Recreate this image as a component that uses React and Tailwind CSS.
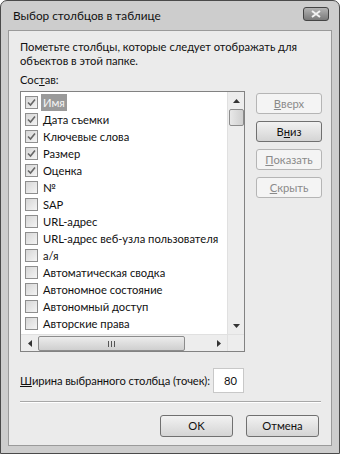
import React from 'react'

// Column chooser dialog (Vista-style, grayscale)

const rows = [
  { label: 'Имя', checked: true, selected: true },
  { label: 'Дата съемки', checked: true },
  { label: 'Ключевые слова', checked: true },
  { label: 'Размер', checked: true },
  { label: 'Оценка', checked: true },
  { label: '№' },
  { label: 'SAP' },
  { label: 'URL-адрес' },
  { label: 'URL-адрес веб-узла пользователя' },
  { label: 'а/я' },
  { label: 'Автоматическая сводка' },
  { label: 'Автономное состояние' },
  { label: 'Автономный доступ' },
  { label: 'Авторские права' },
  { label: '' }, // partly hidden row under the scrollbar
]

function CheckBox({ checked }) {
  return (
    <div className="w-[13px] h-[13px] border border-[#8e8e8e] bg-gradient-to-br from-[#d6d6d6] to-[#f4f4f4] flex items-center justify-center shrink-0">
      {checked && (
        <svg width="9" height="9" viewBox="0 0 9 9">
          <path d="M1 4.5 L3.5 7 L8 1.5" fill="none" stroke="#666" strokeWidth="1.6" />
        </svg>
      )}
    </div>
  )
}

function Arrow({ dir }) {
  const pts = {
    up: '0,4 3.5,0 7,4',
    down: '0,0 3.5,4 7,0',
    left: '4,0 0,3.5 4,7',
    right: '0,0 4,3.5 0,7',
  }[dir]
  const vertical = dir === 'up' || dir === 'down'
  return (
    <svg width={vertical ? 7 : 4} height={vertical ? 4 : 7}>
      <polygon points={pts} fill="#333" />
    </svg>
  )
}

function SideButton({ children, enabled }) {
  return (
    <div
      className={`h-[21px] w-[66px] rounded-[3px] border flex items-center justify-center ${
        enabled
          ? 'border-[#707070] bg-gradient-to-b from-[#f2f2f2] to-[#d4d4d4] text-[#111]'
          : 'border-[#b5b5b5] bg-[#f4f4f4] text-[#8a8a8a]'
      }`}
    >
      {children}
    </div>
  )
}

export default function App() {
  return (
    <div
      className="w-[340px] h-[454px] bg-[#cdcdcd] border border-[#4a4a4a] rounded-t-[7px] flex flex-col px-[7px] pb-[7px] text-[#111]"
      style={{ fontFamily: 'Lato, "Noto Sans", sans-serif' }}
    >
      {/* ── TITLE BAR ─────────────────────────────── */}
      <div className="h-[29px] flex items-center justify-between pl-[5px] pr-[3px]">
        <span className="text-[11.8px] text-[#111]">Выбор столбцов в таблице</span>
        <div className="w-[26px] h-[14px] mt-[-4px] rounded-[3px] border border-[#444] bg-gradient-to-b from-[#b4b4b4] to-[#7a7a7a] flex items-center justify-center">
          <svg width="10" height="8" viewBox="0 0 10 8">
            <path d="M1 1 L9 7 M9 1 L1 7" stroke="#f2f2f2" strokeWidth="2" />
          </svg>
        </div>
      </div>

      {/* ── CLIENT AREA ───────────────────────────── */}
      <div className="flex-1 bg-[#ebebeb] border border-[#9a9a9a] flex flex-col pl-[11px] pr-[11px] pt-[9px] text-[11.2px] leading-[14px]">
        <p className="pr-[20px]">Пометьте столбцы, которые следует отображать для объектов в этой папке.</p>
        <p className="mt-[5px]">
          Сос<span className="underline">т</span>ав:
        </p>

        <div className="flex mt-[4px] gap-[11px]">
          {/* list box */}
          <div className="w-[225px] h-[261px] border border-[#828282] bg-white flex flex-col shrink-0">
            <div className="flex flex-1 min-h-0">
              <div className="flex-1 overflow-hidden pt-[2px] pl-[4px]">
                {rows.map((r, i) => (
                  <div key={i} className="h-[17px] flex items-center gap-[3px] whitespace-nowrap">
                    <CheckBox checked={r.checked} />
                    {r.label && (
                      <span
                        className={`px-[2px] leading-[17px] ${
                          r.selected ? 'bg-[#9a9a9a] text-[#f4f4f4]' : ''
                        }`}
                      >
                        {r.label}
                      </span>
                    )}
                  </div>
                ))}
              </div>
              {/* vertical scrollbar */}
              <div className="w-[17px] bg-[#ededed] border-l border-[#e0e0e0] flex flex-col items-center">
                <div className="h-[17px] flex items-center justify-center"><Arrow dir="up" /></div>
                <div className="w-[15px] h-[17px] rounded-[2px] border border-[#8c8c8c] bg-gradient-to-r from-[#e8e8e8] to-[#cfcfcf]" />
                <div className="flex-1" />
                <div className="h-[17px] flex items-center justify-center"><Arrow dir="down" /></div>
              </div>
            </div>
            {/* horizontal scrollbar */}
            <div className="h-[17px] flex bg-[#ededed] border-t border-[#e0e0e0]">
              <div className="w-[17px] flex items-center justify-center"><Arrow dir="left" /></div>
              <div className="w-[147px] h-[15px] mt-[1px] rounded-[2px] border border-[#8c8c8c] bg-gradient-to-b from-[#ececec] to-[#cfcfcf] flex items-center justify-center gap-[2px]">
                <div className="w-[1px] h-[6px] bg-[#555]" />
                <div className="w-[1px] h-[6px] bg-[#555]" />
                <div className="w-[1px] h-[6px] bg-[#555]" />
              </div>
              <div className="flex-1" />
              <div className="w-[17px] flex items-center justify-center"><Arrow dir="right" /></div>
              <div className="w-[17px] bg-[#ededed] border-l border-[#e0e0e0]" />
            </div>
          </div>

          {/* side buttons */}
          <div className="flex flex-col gap-[7px] pt-[2px]">
            <SideButton>
              <span className="underline">В</span>верх
            </SideButton>
            <SideButton enabled>
              В<span className="underline">н</span>из
            </SideButton>
            <SideButton>
              <span className="underline">П</span>оказать
            </SideButton>
            <SideButton>
              <span className="underline">С</span>крыть
            </SideButton>
          </div>
        </div>

        {/* width field */}
        <div className="flex items-center mt-[16px] gap-[3px]">
          <span className="tracking-[-0.1px]">
            <span className="underline">Ш</span>ирина выбранного столбца (точек):
          </span>
          <div className="w-[31px] h-[25px] bg-white border border-[#c8c8c8] flex items-center justify-end pr-[6px]">
            80
          </div>
        </div>

        <div className="h-px bg-[#a8a8a8] mt-[8px] w-[301px] border-b border-white box-content" />

        {/* footer buttons */}
        <div className="flex justify-end gap-[13px] mt-[12px] pr-[1px]">
          <div className="w-[73px] h-[22px] rounded-[3px] border border-[#707070] bg-gradient-to-b from-[#f2f2f2] to-[#d4d4d4] flex items-center justify-center">
            OK
          </div>
          <div className="w-[73px] h-[22px] rounded-[3px] border border-[#707070] bg-gradient-to-b from-[#f2f2f2] to-[#d4d4d4] flex items-center justify-center">
            Отмена
          </div>
        </div>
      </div>
    </div>
  )
}
